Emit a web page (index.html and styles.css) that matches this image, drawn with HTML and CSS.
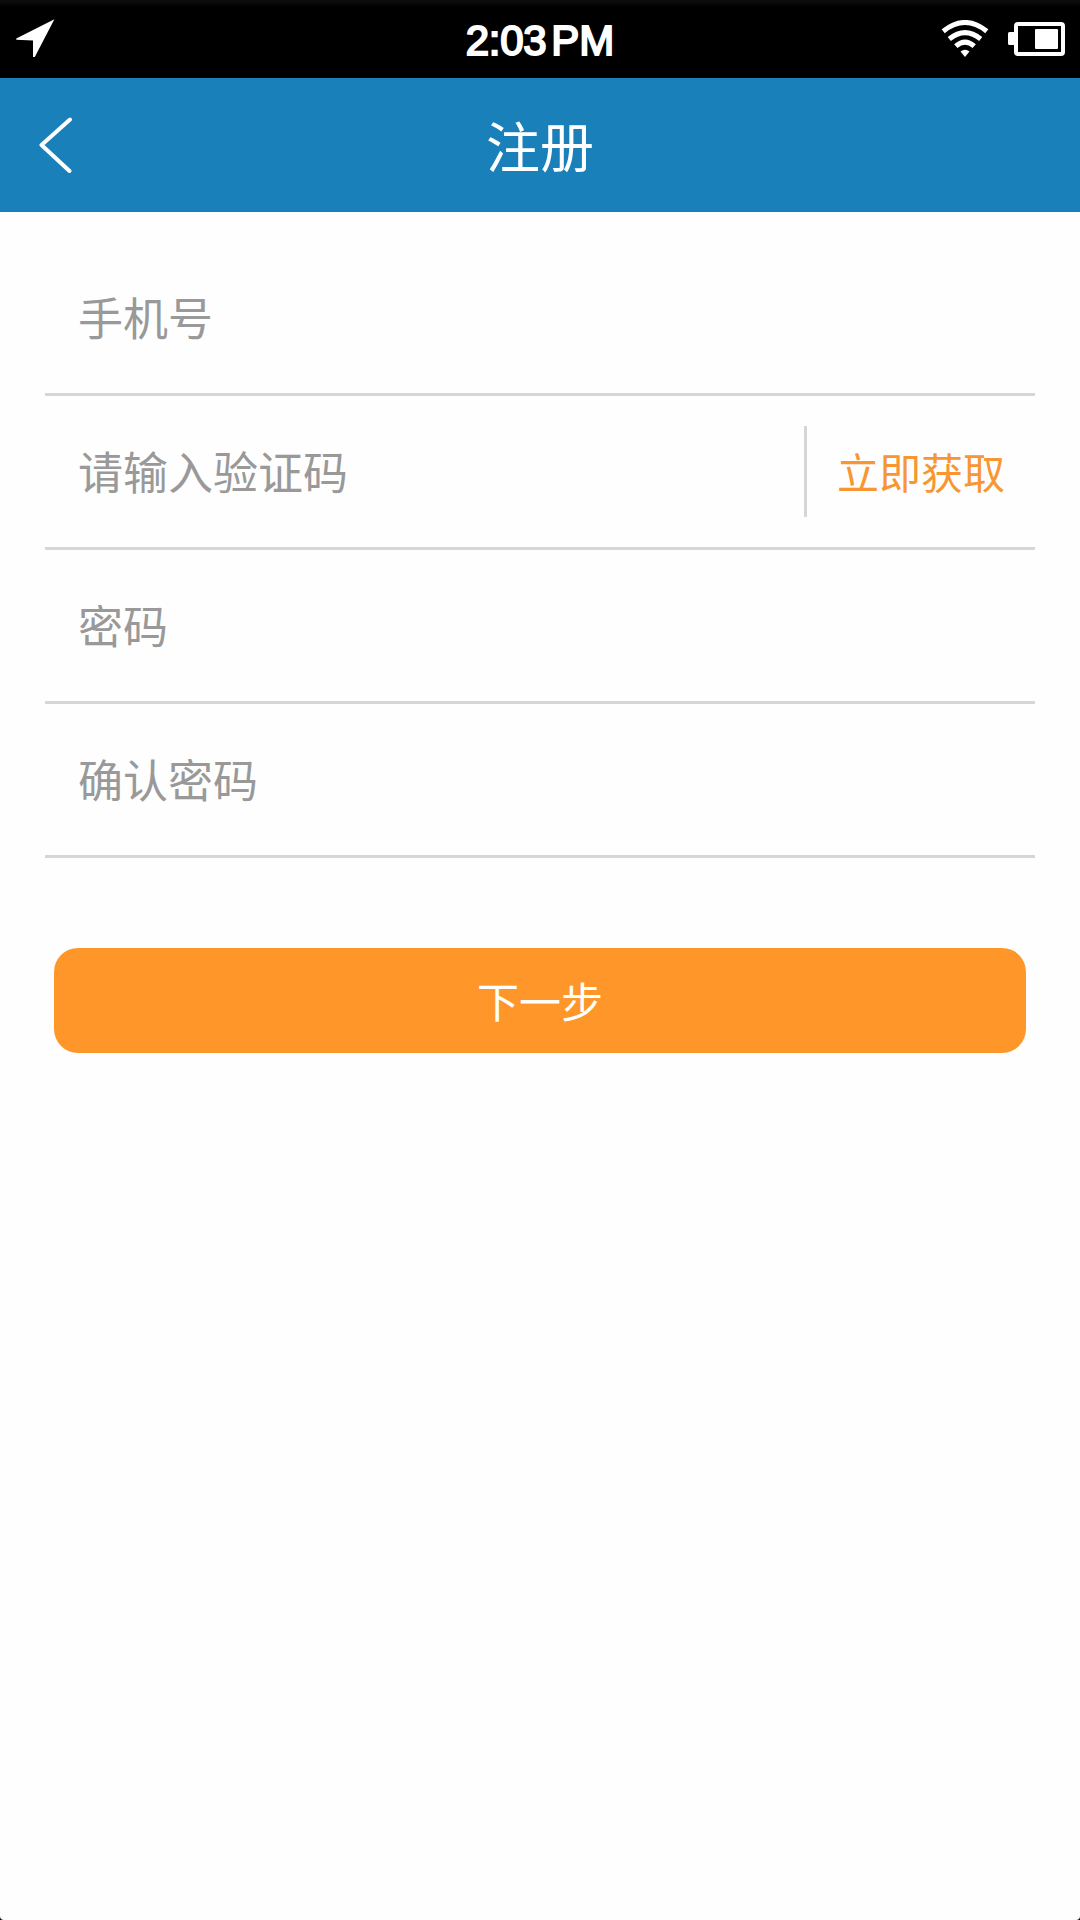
FILE: index.html
```html
<!DOCTYPE html>
<html lang="zh-CN">
<head>
<meta charset="utf-8">
<title>注册</title>
<link rel="stylesheet" href="styles.css">
</head>
<body>
<div class="screen">
  <div class="status-bar">
    <svg class="location-icon" viewBox="0 0 40 40"><path d="M38.4 .2 18.800 38H17V21.500L.3 20.800V19.500Z"/></svg>
    <div class="clock"><span class="time">2:03</span><span class="period">PM</span></div>
    <div class="status-icons">
      <svg class="wifi-icon" viewBox="0 0 48 38">
        <g fill="none" stroke="#fff">
          <path d="M2.2 11.2Q24-6.2 45.8 11.2" stroke-width="5"/>
          <path d="M8.3 19Q24 6.2 39.7 19" stroke-width="5"/>
          <path d="M14.8 26.2Q24 18.2 33.2 26.2" stroke-width="5"/>
        </g>
        <path d="M19.5 31.5Q24 28.2 28.5 31.5L24 37Z"/>
      </svg>
      <svg class="battery-icon" viewBox="0 0 57 34">
        <rect x="8" y="2" width="47" height="30" rx="2" fill="none" stroke="#fff" stroke-width="4"/>
        <path d="M7 10v13H1.5q-1.500 0-1.500-1.500v-10q0-1.500 1.500-1.500ZM27 8q0-1 1-1h21q1 0 1 1v18q0 1-1 1h-21q-1 0-1-1Z"/>
      </svg>
    </div>
  </div>
  <header class="nav-bar">
    <svg class="back-icon" viewBox="0 0 34 56"><path d="M31 2.500 2.500 28 30.500 54" fill="none" stroke="#fff" stroke-width="4" stroke-linecap="round" stroke-linejoin="round"/></svg>
    <h1 class="title">注册</h1>
  </header>
  <main class="form">
    <div class="field"><span class="placeholder">手机号</span></div>
    <div class="field">
      <span class="placeholder">请输入验证码</span>
      <span class="get-code">立即获取</span>
    </div>
    <div class="field"><span class="placeholder">密码</span></div>
    <div class="field"><span class="placeholder">确认密码</span></div>
    <button class="next" type="button">下一步</button>
  </main>
</div>
</body>
</html>
```
FILE: styles.css
```css
* { box-sizing: border-box; }
body {
  margin: 0;
  background: #000;
  font-family: "Noto Sans CJK SC", sans-serif;
}
svg { display: block; fill: #fff; }
.screen {
  width: 1080px;
  height: 1920px;
  background: #fefefe;
  border-radius: 0 0 4px 4px;
  overflow: hidden;
}
.status-bar {
  display: grid;
  grid-template-columns: 1fr auto 1fr;
  height: 78px;
  padding: 0 15px;
  background: linear-gradient(#0e0e0e, #000 7px);
}
.location-icon { width: 40px; height: 40px; margin: 19px 0 0 1px; }
.clock {
  display: flex;
  gap: 5px;
  padding-top: 17px;
  color: #fff;
  font: 400 42px/48px "Liberation Sans", sans-serif;
  -webkit-text-stroke: 2px #fff;
}
.time { letter-spacing: -0.300px; }
.status-icons { display: flex; justify-content: flex-end; gap: 19px; }
.wifi-icon { width: 48px; height: 38px; margin-top: 20px; }
.battery-icon { width: 57px; height: 34px; margin-top: 22px; }
.nav-bar {
  display: grid;
  grid-template-columns: 1fr auto 1fr;
  height: 134px;
  padding-left: 39px;
  padding-right: 39px;
  background: #1a80ba;
  color: #fff;
}
.back-icon { width: 34px; height: 56px; margin-top: 39px; }
.title { margin: 0; font-size: 54px; font-weight: 400; line-height: 134px; }
.form { display: flex; flex-direction: column; padding: 30px 45px; }
.field {
  display: flex;
  align-items: center;
  justify-content: space-between;
  height: 154px;
  padding: 0 30px 0 33px;
  border-bottom: 3px solid #d6d6d6;
}
.placeholder { padding-bottom: 1px; color: #999; font-size: 45px; line-height: 66px; }
.get-code {
  height: 91px;
  padding-left: 30px;
  border-left: 3px solid #d6d6d6;
  color: #f79633;
  font-size: 42px;
  line-height: 89px;
}
.next {
  height: 105px;
  margin: 90px 9px 0;
  padding: 0 0 2px;
  border: 0;
  border-radius: 24px;
  background: #ff962a;
  color: #fff;
  font: 400 42px/103px "Noto Sans CJK SC", sans-serif;
}
```
